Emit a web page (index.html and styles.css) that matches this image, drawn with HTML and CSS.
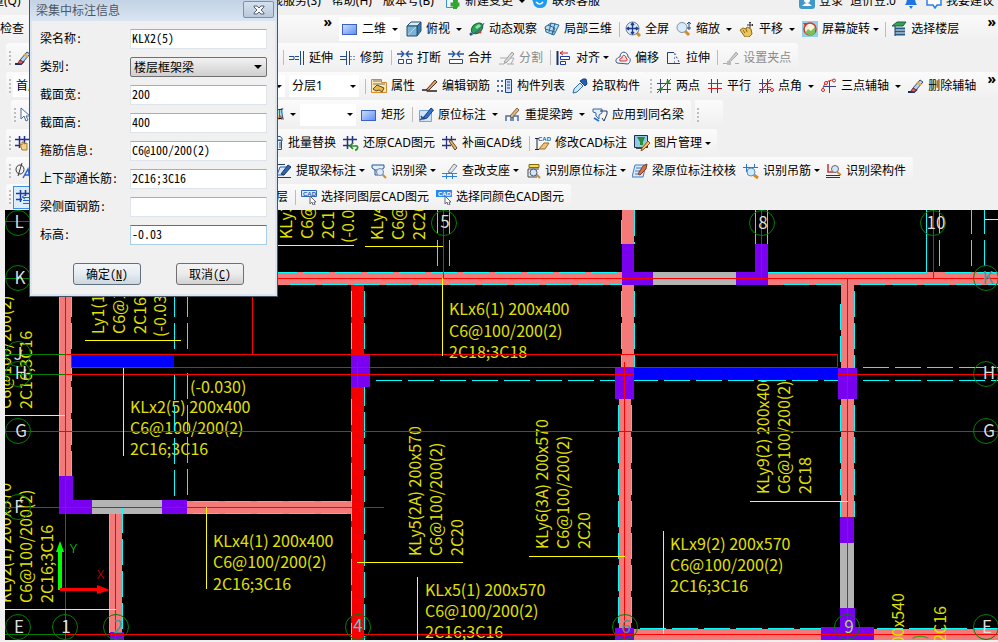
FILE: index.html
```html
<!DOCTYPE html>
<html lang="zh-CN">
<head>
<meta charset="utf-8">
<title>梁集中标注信息</title>
<link rel="stylesheet" href="styles.css">
</head>
<body>
<svg class="defs" aria-hidden="true">
  <defs>
    <linearGradient id="gBlue" x1="0" y1="0" x2="1" y2="1"><stop offset="0" stop-color="#cfe0ff"/><stop offset="1" stop-color="#5b8df0"/></linearGradient>
    <symbol id="rect" viewBox="0 0 16 16"><rect x=".5" y="3.500" width="14" height="10" fill="url(#gBlue)" stroke="#3a62c4"/></symbol>
    <symbol id="cube" viewBox="0 0 16 16"><path d="M1 5 5 1h10l-4 4z" fill="#d8edf8" stroke="#27506e"/><path d="M11 5l4-4v9l-4 5z" fill="#3b7ba6" stroke="#27506e"/><path d="M1 5h10v10H1z" fill="#79b4d8" stroke="#27506e"/><path d="M2 14 10 6" stroke="#b7dcf0"/></symbol>
    <symbol id="orbit" viewBox="0 0 16 16"><ellipse cx="8.500" cy="7.500" rx="6.500" ry="4.500" transform="rotate(-40 8 8)" fill="#2fa05a" stroke="#14673a"/><path d="M6 6l4-3 2 2-4 3z" fill="#9ae0a8"/><path d="M1 14c5-1 12-7 14-12" fill="none" stroke="#35608e"/><circle cx="2" cy="13" r="1.500" fill="#2a5288"/><circle cx="11" cy="11" r="1.500" fill="#d33"/></symbol>
    <symbol id="local3d" viewBox="0 0 16 16"><path d="M1 6l6-4 8 2-5 10-8-3z" fill="#b9dcf0" stroke="#2b6894"/><path d="M4 4l7 3-3 7M7 2l-2 9M1 8l10 3M11 2 8 13" fill="none" stroke="#2b6894"/></symbol>
    <symbol id="full" viewBox="0 0 16 16"><path d="M11 11l4 4" stroke="#d38a2a" stroke-width="3"/><circle cx="7.500" cy="7.500" r="6.500" fill="#dbe8fb" stroke="#6a7fa6"/><path d="M7.500 2v11M2 7.500h11M6 4l1.500-2L9 4M6 11l1.500 2L9 11M4 6 2 7.500 4 9M11 6l2 1.500L11 9" fill="none" stroke="#1c3d86" stroke-width="1.300"/></symbol>
    <symbol id="zoom" viewBox="0 0 16 16"><path d="M9 10l4 4" stroke="#d38a2a" stroke-width="3"/><circle cx="6" cy="6.500" r="5" fill="#d7ebfa" stroke="#8091ab"/><path d="M13 1v5M11 3l2-2 2 2M11 7h4M13 6v3" fill="none" stroke="#244a7a"/></symbol>
    <symbol id="pan" viewBox="0 0 16 16"><path d="M1 9l3-2 3 1 1-2 2 1 2 1 1 5-3 3H6z" fill="#e9c55c" stroke="#8e6a1e"/><path d="M4 9l2 3M7 8l1 3" stroke="#8e6a1e"/><path d="M11 1v6M8 4h6M10 2l1-1 1 1M13 3l1 1-1 1" fill="none" stroke="#333"/></symbol>
    <symbol id="rotate" viewBox="0 0 16 16"><path d="M0 0h16v16H0z" fill="#8fd0ea"/><circle cx="8" cy="8" r="6" fill="#f7f4dc" stroke="#d8352c" stroke-width="1.500"/><path d="M3 12l3-4 3 2 4-4v6l-4 3z" fill="#7ac05b"/><path d="M1 2l4 0-1 4z" fill="#d8352c"/></symbol>
    <symbol id="floors" viewBox="0 0 16 16"><path d="M1 5l5-4h9l-3 4z" fill="#36a05a" stroke="#156638"/><path d="M4 7.500h10M4 10.500h10M4 13.500h10" stroke="#245a8c" stroke-width="2"/><path d="M4 5v10" stroke="#1d3c66"/></symbol>
    <symbol id="extend" viewBox="0 0 16 16"><path d="M11.500 1v14M14.500 1v14" stroke="#224b8b"/><path d="M0 6.500h5v3H0M6 6.500h4M6 9.500h4" fill="none" stroke="#224b8b"/></symbol>
    <symbol id="trim" viewBox="0 0 16 16"><path d="M6.500 1v14M9.500 1v14M0 6.500h6M0 9.500h6" stroke="#224b8b"/><path d="M10 6.500h6M10 9.500h6" stroke="#7d97be" stroke-dasharray="2 1"/></symbol>
    <symbol id="break" viewBox="0 0 16 16"><path d="M0 4h6M16 4h-6M4 1l3 3-3 3M12 1 9 4l3 3" fill="none" stroke="#2450a0" stroke-width="1.300"/><path d="M1.500 9.500h5v4h-5zM9.500 9.500h5v4h-5z" fill="#fff" stroke="#2c4a80"/></symbol>
    <symbol id="merge" viewBox="0 0 16 16"><path d="M0 4h6M16 4h-6M4 1l3 3-3 3M12 1 9 4l3 3" fill="none" stroke="#2450a0" stroke-width="1.300"/><path d="M1.500 9.500h13v4h-13z" fill="#fff" stroke="#2c4a80"/></symbol>
    <symbol id="split" viewBox="0 0 16 16"><path d="M1 8h8l-4 6H0M8 14h7M11 8h4l-3 6" fill="none" stroke="#aaa"/><path d="M5 12 13 2l2 2-8 9z" fill="#ddd" stroke="#999"/></symbol>
    <symbol id="align" viewBox="0 0 16 16"><path d="M1.500 1v14" stroke="#1a2f6c" stroke-width="2"/><path d="M4.500 6.500h9v3h-9zM4.500 11.500h5v3h-5z" fill="#fff" stroke="#1b39a8"/><path d="M4 3h8M7 1 4 3l3 2" fill="none" stroke="#c22"/></symbol>
    <symbol id="offset" viewBox="0 0 16 16"><path d="M2 13c-3-3 1-6 3-6 0-7 8-6 8 0 3 1 3 5 0 7z" fill="#f2f6fc" stroke="#38598d"/><path d="M5 11c-1-2 1-3 2-3 0-4 4-3 4 0 2 1 1 3 0 3z" fill="#ffd9d4" stroke="#cc2f2b"/></symbol>
    <symbol id="stretch" viewBox="0 0 16 16"><path d="M8 2.500H1.500v11H14" fill="none" stroke="#1d3f7c"/><path d="M8.500 3l5 10" stroke="#1d3f7c" stroke-dasharray="2 2"/><path d="M8.500 3v10" stroke="#7892bb" stroke-dasharray="2 2"/></symbol>
    <symbol id="grip" viewBox="0 0 16 16"><path d="M0 13.500h4M12 13.500h4" stroke="#aaa"/><path d="M5 12 13 2l2 2-8 8z" fill="#ccc" stroke="#aaa"/><path d="M4 11h4v4H4z" fill="#bbb"/></symbol>
    <symbol id="prop" viewBox="0 0 16 16"><path d="M.5 1.500h10v3h5v10H.5z" fill="#fbe6b2" stroke="#d38b2d"/><path d="M2 3h8M2 6h12" stroke="#777"/><path d="M2 11l4-4 7 3-2 4-3-2-3 1z" fill="#e4b84a" stroke="#5d4a20"/></symbol>
    <symbol id="pen" viewBox="0 0 16 16"><path d="M0 12h4l3-2M5 13h10" fill="none" stroke="#222" stroke-width="1.500"/><path d="M5 11 13 2l2 2-8 8-3 1z" fill="#d7a070" stroke="#5b3420"/></symbol>
    <symbol id="list" viewBox="0 0 16 16"><path d="M0 3h2M4 3h2M0 8h2M4 8h2M0 13h2M4 13h2" stroke="#1f4590" stroke-width="1.500"/><path d="M8.500 1.500h6v13h-6z" fill="#cfe0f7" stroke="#1f4590"/><path d="M10 4h3M10 7h3M10 10h3" stroke="#1f4590"/></symbol>
    <symbol id="pick" viewBox="0 0 16 16"><path d="M1 15l1-4 6-6 3 3-6 6z" fill="#cfe7f8" stroke="#2d6da3"/><path d="M8 3l5 5 2-2-1-5-3 0z" fill="#1f62b8" stroke="#163f80"/></symbol>
    <symbol id="twopt" viewBox="0 0 16 16"><path d="M4.500 1v14M11.500 1v14M1 5.500h14M1 11.500h14" stroke="#3a3f86"/><path d="M1 15 15 1" stroke="#c22"/><circle cx="5" cy="11" r="1.700" fill="#2a8a2a"/><circle cx="12" cy="4" r="1.700" fill="#2a8a2a"/></symbol>
    <symbol id="para" viewBox="0 0 16 16"><path d="M4.500 1v14M10.500 1v14" stroke="#3a3f86"/><path d="M1 5.500h14M1 10.500h14" stroke="#c22"/></symbol>
    <symbol id="ptang" viewBox="0 0 16 16"><path d="M4.500 1v14M9.500 1v14M1 5.500h14M1 11.500h12" stroke="#3a3f86"/><path d="M1 15 13 1M9 12c0-3 4-4 5-1" fill="none" stroke="#c22"/><circle cx="14" cy="12" r="1.500" fill="none" stroke="#c22"/></symbol>
    <symbol id="threept" viewBox="0 0 16 16"><path d="M8.500 3v12M3 8.500h12" stroke="#3a3f86"/><path d="M2 12C2 6 6 2 13 2" fill="none" stroke="#c22"/><circle cx="2" cy="12" r="1.500" fill="#fff" stroke="#c22"/><circle cx="5" cy="5" r="1.500" fill="#fff" stroke="#c22"/><circle cx="13" cy="2.500" r="1.500" fill="#fff" stroke="#c22"/></symbol>
    <symbol id="erase" viewBox="0 0 16 16"><path d="M0 14h6l3-3" fill="none" stroke="#1b2c60" stroke-width="2"/><path d="M5 10 12 2l3 2-7 8z" fill="#bcd0e6" stroke="#334d78"/><path d="M5 10l3 2-2 2-3-1z" fill="#e06060" stroke="#733"/><path d="M9 4l4 3" stroke="#e0b040" stroke-width="2"/></symbol>
    <symbol id="origin" viewBox="0 0 16 16"><path d="M1.500 3.500h12v11h-12z" fill="#cfe2f8" stroke="#7ea2d4"/><path d="M3 9l2 3 4-5M2 13l4-3" fill="none" stroke="#224b8b" stroke-width="1.500"/><path d="M6 10 13 1l2.500 2L9 11l-3 1z" fill="#2f74cc" stroke="#173e80"/></symbol>
    <symbol id="respan" viewBox="0 0 16 16"><path d="M1 14V9h5v5M8 14V9h5v5" fill="none" stroke="#4d6ea0" stroke-width="1.500"/><path d="M5 9 12 1l2 2-7 8z" fill="#d9b78c" stroke="#80603a"/></symbol>
    <symbol id="apply" viewBox="0 0 16 16"><path d="M1 2h9v4l-3 2v4L4 9V6L1 5z" fill="#e3eefb" stroke="#3666a8"/><path d="M8 4h7v3l-3 7-2-3" fill="none" stroke="#22355f"/><path d="M2 11l5 3" stroke="#2a70c8" stroke-width="2"/></symbol>
    <symbol id="trash" viewBox="0 0 16 16"><path d="M4.500 5.500h9v9h-9zM3 5h12M6 7v6M9 7v6M12 7v6" fill="#e8f0fa" stroke="#2c507f"/><path d="M8 4c0-4 6-3 6 0" fill="none" stroke="#2c507f"/></symbol>
    <symbol id="restore" viewBox="0 0 16 16"><path d="M4.500 1v13M9.500 1v8M0 4.500h14M0 10.500h8" stroke="#27347c" stroke-width="1.500"/><path d="M8 11h4c4-1 3 4 0 4M10 8l-3 3 3 3" fill="none" stroke="#2c8c2c" stroke-width="1.700"/></symbol>
    <symbol id="patch" viewBox="0 0 16 16"><path d="M4.500 1v13M9.500 1v9M0 4.500h14M0 10.500h9" stroke="#27347c" stroke-width="1.300"/><path d="M7 6l2-1 6 8-2 2z" fill="#e5be66" stroke="#66401a"/></symbol>
    <symbol id="cadedit" viewBox="0 0 16 16"><path d="M0 3.500h4M2 4v10M0 14.500h4" stroke="#222" fill="none"/><text x="3" y="6" class="cad-mark">CAD</text><path d="M4 14l5-6h5l-4 6z" fill="#efc47a" stroke="#9c6a25"/></symbol>
    <symbol id="image" viewBox="0 0 16 16"><path d="M.5.500h13v12H.5z" fill="#8fcbe8" stroke="#222b50"/><path d="M3 2h8L9 7v3H6V7z" fill="#2e8a36"/><path d="M2 13h8" stroke="#444" stroke-width="2"/><path d="M8 13l6-7 2 2-6 6-3 2z" fill="#f0c45d" stroke="#9a4a20"/></symbol>
    <symbol id="extract" viewBox="0 0 16 16"><path d="M0 1.500h9M0 14.500h15" stroke="#223a6c"/><path d="M1 12 4 4h7l-3 8z" fill="#dbe9fa" stroke="#2e5c9c"/><path d="M5 11 12 2l3 2-7 8z" fill="#2f67b6" stroke="#173468"/></symbol>
    <symbol id="recog" viewBox="0 0 16 16"><path d="M1 2h12v3l-3 2H4L1 5z" fill="#e3eefb" stroke="#27549a"/><path d="M4 7v5h3" fill="none" stroke="#27549a"/><path d="M11 11l4 4" stroke="#d38a2a" stroke-width="2"/><circle cx="9" cy="9" r="3.500" fill="#d9ecfb" stroke="#76869c"/></symbol>
    <symbol id="support" viewBox="0 0 16 16"><path d="M0 10.500h15M0 13.500h15M4.500 10v6M10.500 10v6" stroke="#2f7fd6"/><path d="M6 9 12 1l3 2-6 7z" fill="#e3e8ef" stroke="#75808f"/></symbol>
    <symbol id="recorig" viewBox="0 0 16 16"><path d="M4 1.500h10v3H4z" fill="#f5dc4c" stroke="#826a10"/><path d="M3 6h11M3 6v8h9" stroke="#444" fill="none"/><path d="M11 11l4 4" stroke="#d38a2a" stroke-width="2"/><circle cx="8.500" cy="9.500" r="3.500" fill="#cfe5f8" stroke="#556"/></symbol>
    <symbol id="check" viewBox="0 0 16 16"><path d="M3 2h11l-3 12H0z" fill="#dbeafa" stroke="#3b7cc4"/><path d="M4 5h6M3 8h5M3 11h4" stroke="#3b7cc4"/><path d="M6 11l5-8 4-2-1 5-6 6z" fill="#d5744c" stroke="#833c22"/></symbol>
    <symbol id="hanger" viewBox="0 0 16 16"><path d="M0 4.500h15M3.500 1v8M11.500 1v4" stroke="#2f74cc"/><path d="M11 12l4 3" stroke="#d38a2a" stroke-width="3"/><circle cx="8" cy="9" r="4" fill="#cdeafa" stroke="#5b8cb4"/></symbol>
    <symbol id="reccomp" viewBox="0 0 16 16"><path d="M2 1v8h7" fill="none" stroke="#c33" stroke-width="1.500"/><path d="M0 12.500h14M0 14.500h14" stroke="#334"/><path d="M11 9l4 3" stroke="#d38a2a" stroke-width="2"/><circle cx="9" cy="6" r="3.500" fill="#d3e7fa" stroke="#667"/></symbol>
    <symbol id="cadsel" viewBox="0 0 16 16"><path d="M.5 1.500h15v6H.5z" fill="#dcebfb" stroke="#2a68c0"/><text x="2" y="7" class="cad-mark">CAD</text><path d="M9 7v8l2-2 1 3h2l-1-3h2z" fill="#fff" stroke="#667"/></symbol>
    <symbol id="cadcol" viewBox="0 0 16 16"><path d="M0 1h16v7H0z" fill="#2f86e8"/><text x="2" y="7" class="cad-mark cad-mark--light">CAD</text><path d="M9 7v8l2-2 1 3h2l-1-3h2z" fill="#fff" stroke="#667"/></symbol>
    <symbol id="newdoc" viewBox="0 0 16 16"><path d="M1.500.500h11v14h-11z" fill="#eef7ff" stroke="#3d8fd4"/><path d="M10 7v9M5.500 11.500h9" stroke="#35a532" stroke-width="4"/></symbol>
    <symbol id="service" viewBox="0 0 16 16"><path d="M0 6h15v3q-1 6-7 6T1 9z" fill="#1d9bf0"/><path d="M4 9q4 4 7 0" fill="none" stroke="#fff" stroke-width="1.500"/></symbol>
    <symbol id="user" viewBox="0 0 16 16"><rect width="16" height="16" rx="3" fill="#4298c8"/><circle cx="8" cy="7" r="3" fill="#fff"/><path d="M3 13q5-6 10 0z" fill="#fff"/></symbol>
    <symbol id="bell" viewBox="0 0 16 16"><path d="M2 12q2-2 2-7 4-6 8 0 0 5 2 7z" fill="#1e74e0"/><path d="M6 13h4l-2 3z" fill="#1e74e0"/></symbol>
    <symbol id="bubble" viewBox="0 0 16 16"><path d="M1 3h14v9h-4l-2 3-2-3H1z" fill="#fff" stroke="#2f7fe0" stroke-width="1.500"/></symbol>
    <symbol id="cursor" viewBox="0 0 16 16"><path d="M1 1v11l3-3 2 5 2-1-2-4h4z" fill="#fff" stroke="#4b6a9a"/></symbol>
    <symbol id="gridhand" viewBox="0 0 16 16"><path d="M4.500 1v12M9.500 1v8M0 4.500h14M0 10.500h5" stroke="#222a90" stroke-width="1.500"/><path d="M5 9l2 1V7l2 0v2l3-1v7H7z" fill="#f2d28a" stroke="#a47a2a"/></symbol>
    <symbol id="phi" viewBox="0 0 16 16"><ellipse cx="5" cy="6.500" rx="4" ry="4.500" fill="none" stroke="#333"/><path d="M7 0 3 13" stroke="#333"/><path d="M8 15l5-9 2 9M10 12h5" fill="none" stroke="#2e62c8" stroke-width="1.500"/></symbol>
    <symbol id="gridlayer" viewBox="0 0 16 16"><path d="M4.500 1v12M9.500 1v6M0 4.500h14M0 10.500h6" stroke="#1d3f8c" stroke-width="1.500"/><path d="M7 8.500h8M7 11.500h8M7 14.500h8M9 6 6 8l3 2" fill="none" stroke="#1b66d0"/></symbol>
  </defs>
</svg>

<header class="toolbars">
  <nav class="menu" aria-label="菜单">
    <div class="menu__dock"><button class="btn">量(Q)</button></div>
    <button class="menu__item">在线服务(S)</button>
    <button class="menu__item">帮助(H)</button>
    <button class="menu__item">版本号(B)</button>
    <button class="btn btn--split"><svg class="ico"><use href="#newdoc"/></svg>新建变更</button>
    <button class="btn"><svg class="ico"><use href="#service"/></svg>联系客服</button>
    <div class="menu__account">
      <button class="btn"><svg class="ico"><use href="#user"/></svg>登录</button>
      <span class="btn">造价豆:0</span>
      <button class="btn" aria-label="通知"><svg class="ico"><use href="#bell"/></svg></button>
      <button class="btn"><svg class="ico"><use href="#bubble"/></svg>我要建议</button>
    </div>
  </nav>

  <div class="row row--full">
    <div class="dock dock--wide"><button class="btn">检查</button><button class="more">»</button></div>
    <div class="band">
      <button class="btn btn--split btn--white"><svg class="ico"><use href="#rect"/></svg>二维</button>
      <button class="btn btn--split"><svg class="ico"><use href="#cube"/></svg>俯视</button>
      <button class="btn"><svg class="ico"><use href="#orbit"/></svg>动态观察</button>
      <button class="btn"><svg class="ico"><use href="#local3d"/></svg>局部三维</button>
      <i class="sep"></i>
      <button class="btn"><svg class="ico"><use href="#full"/></svg>全屏</button>
      <button class="btn btn--split"><svg class="ico"><use href="#zoom"/></svg>缩放</button>
      <button class="btn btn--split"><svg class="ico"><use href="#pan"/></svg>平移</button>
      <button class="btn btn--menu"><svg class="ico"><use href="#rotate"/></svg>屏幕旋转</button>
      <i class="sep"></i>
      <button class="btn"><svg class="ico"><use href="#floors"/></svg>选择楼层</button>
    </div>
    <button class="more">»</button>
  </div>

  <div class="row">
    <div class="dock dock--panel"><i class="handle"></i><button class="btn" aria-label="删除"><svg class="ico"><use href="#erase"/></svg></button></div>
    <div class="band band--sep">
      <i class="sep"></i>
      <button class="btn"><svg class="ico"><use href="#extend"/></svg>延伸</button>
      <button class="btn"><svg class="ico"><use href="#trim"/></svg>修剪</button>
      <i class="sep"></i>
      <button class="btn"><svg class="ico"><use href="#break"/></svg>打断</button>
      <button class="btn"><svg class="ico"><use href="#merge"/></svg>合并</button>
      <button class="btn" disabled><svg class="ico"><use href="#split"/></svg>分割</button>
      <i class="sep"></i>
      <button class="btn btn--menu"><svg class="ico"><use href="#align"/></svg>对齐</button>
      <button class="btn"><svg class="ico"><use href="#offset"/></svg>偏移</button>
      <button class="btn"><svg class="ico"><use href="#stretch"/></svg>拉伸</button>
      <i class="sep"></i>
      <button class="btn" disabled><svg class="ico"><use href="#grip"/></svg>设置夹点</button>
    </div>
  </div>

  <div class="row">
    <div class="dock dock--panel"><i class="handle"></i><label class="combo combo--floor"><select aria-label="楼层"><option>首层</option></select></label></div>
    <div class="band">
      <label class="combo combo--stub"><select aria-label="构件"><option></option></select></label>
      <label class="combo combo--layer"><select aria-label="分层"><option>分层1</option></select></label>
      <i class="sep"></i>
      <button class="btn"><svg class="ico"><use href="#prop"/></svg>属性</button>
      <button class="btn"><svg class="ico"><use href="#pen"/></svg>编辑钢筋</button>
      <button class="btn"><svg class="ico"><use href="#list"/></svg>构件列表</button>
      <button class="btn"><svg class="ico"><use href="#pick"/></svg>拾取构件</button>
    </div>
    <div class="band band--grow">
      <i class="handle"></i>
      <button class="btn"><svg class="ico"><use href="#twopt"/></svg>两点</button>
      <button class="btn"><svg class="ico"><use href="#para"/></svg>平行</button>
      <button class="btn btn--split"><svg class="ico"><use href="#ptang"/></svg>点角</button>
      <button class="btn btn--split"><svg class="ico"><use href="#threept"/></svg>三点辅轴</button>
      <button class="btn"><svg class="ico"><use href="#erase"/></svg>删除辅轴</button>
      <button class="more">»</button>
    </div>
  </div>

  <div class="row">
    <div class="dock dock--panel dock--inset"><i class="handle"></i><button class="btn" aria-label="选择"><svg class="ico"><use href="#cursor"/></svg></button></div>
    <div class="band band--arc">
      <button class="btn btn--split btn--flush">弧</button>
      <label class="combo combo--blank"><select aria-label="画法"><option></option></select></label>
      <button class="btn"><svg class="ico"><use href="#rect"/></svg>矩形</button>
      <i class="sep"></i>
      <button class="btn btn--split"><svg class="ico"><use href="#origin"/></svg>原位标注</button>
      <button class="btn btn--split"><svg class="ico"><use href="#respan"/></svg>重提梁跨</button>
      <button class="btn"><svg class="ico"><use href="#apply"/></svg>应用到同名梁</button>
    </div>
    <div class="band band--empty"><i class="handle"></i></div>
  </div>

  <div class="row">
    <div class="dock dock--panel"><i class="handle"></i><button class="btn" aria-label="定位"><svg class="ico"><use href="#gridhand"/></svg></button></div>
    <div class="band">
      <button class="btn"><svg class="ico"><use href="#trash"/></svg>批量替换</button>
      <button class="btn"><svg class="ico"><use href="#restore"/></svg>还原CAD图元</button>
      <button class="btn"><svg class="ico"><use href="#patch"/></svg>补画CAD线</button>
      <i class="sep"></i>
      <button class="btn"><svg class="ico"><use href="#cadedit"/></svg>修改CAD标注</button>
      <button class="btn btn--menu"><svg class="ico"><use href="#image"/></svg>图片管理</button>
    </div>
  </div>

  <div class="row">
    <div class="dock dock--panel"><i class="handle"></i><button class="btn" aria-label="钢筋符号"><svg class="ico"><use href="#phi"/></svg></button></div>
    <div class="band band--text">
      <button class="btn btn--menu"><svg class="ico"><use href="#extract"/></svg>提取梁标注</button>
      <button class="btn btn--menu"><svg class="ico"><use href="#recog"/></svg>识别梁</button>
      <button class="btn btn--menu"><svg class="ico"><use href="#support"/></svg>查改支座</button>
      <button class="btn btn--menu"><svg class="ico"><use href="#recorig"/></svg>识别原位标注</button>
      <button class="btn"><svg class="ico"><use href="#check"/></svg>梁原位标注校核</button>
      <button class="btn btn--menu"><svg class="ico"><use href="#hanger"/></svg>识别吊筋</button>
      <button class="btn"><svg class="ico"><use href="#reccomp"/></svg>识别梁构件</button>
    </div>
  </div>

  <div class="row">
    <div class="dock dock--panel"><i class="handle"></i><button class="btn btn--active" aria-label="选择图层"><svg class="ico"><use href="#gridlayer"/></svg></button></div>
    <div class="band band--text">
      <button class="btn">层</button>
      <i class="sep"></i>
      <button class="btn"><svg class="ico"><use href="#cadsel"/></svg>选择同图层CAD图元</button>
      <button class="btn"><svg class="ico"><use href="#cadcol"/></svg>选择同颜色CAD图元</button>
    </div>
  </div>
</header>

<main class="drawing">
<svg class="plan" viewBox="5 210 993 430" preserveAspectRatio="xMinYMin slice" role="img" aria-label="梁平面图">
  <rect x="5" y="210" width="993" height="430" fill="#000"/>

  <!-- beam annotations -->
  <g class="note">
    <text x="190" y="393">(-0.030)</text>
    <text x="130" y="413">KLx2(5) 200x400</text><text x="130" y="434">C6@100/200(2)</text><text x="130" y="455">2C16;3C16</text>
    <text x="213" y="547">KLx4(1) 200x400</text><text x="213" y="568">C6@100/200(2)</text><text x="213" y="590">2C16;3C16</text>
    <text x="449" y="315">KLx6(1) 200x400</text><text x="449" y="337">C6@100/200(2)</text><text x="449" y="358">2C18;3C18</text>
    <text x="425" y="596">KLx5(1) 200x570</text><text x="425" y="617">C6@100/200(2)</text><text x="425" y="638">2C16;3C16</text>
    <text x="670" y="550">KLx9(2) 200x570</text><text x="670" y="571">C6@100/200(2)</text><text x="670" y="592">2C16;3C16</text>
    <text transform="translate(421 556) rotate(-90)">KLy5(2A) 200x570</text><text transform="translate(442 556) rotate(-90)">C6@100/200(2)</text><text transform="translate(463 556) rotate(-90)">2C20</text>
    <text transform="translate(548 549) rotate(-90)">KLy6(3A) 200x570</text><text transform="translate(569 549) rotate(-90)">C6@100/200(2)</text><text transform="translate(590 549) rotate(-90)">2C20</text>
    <text transform="translate(769 494) rotate(-90)">KLy9(2) 200x400</text><text transform="translate(790 494) rotate(-90)">C6@100/200(2)</text><text transform="translate(811 494) rotate(-90)">2C18</text>
    <text transform="translate(292 239) rotate(-90)">KLy3(1)</text><text transform="translate(313 239) rotate(-90)">C6@100</text><text transform="translate(334 239) rotate(-90)">2C16</text><text transform="translate(354 243) rotate(-90)">(-0.030)</text>
    <text transform="translate(383 240) rotate(-90)">KLy4(1)</text><text transform="translate(404 240) rotate(-90)">C6@100</text><text transform="translate(425 240) rotate(-90)">2C20</text>
    <text transform="translate(104 334) rotate(-90)">Ly1(1)</text><text transform="translate(125 334) rotate(-90)">C6@100</text><text transform="translate(146 334) rotate(-90)">2C16</text><text transform="translate(166 337) rotate(-90)">(-0.030)</text>
    <text transform="translate(11 409) rotate(-90)">C6@100/200(2)</text><text transform="translate(32 409) rotate(-90)">2C16;3C16</text>
    <text transform="translate(11 603) rotate(-90)">KLy2(1) 200x570</text><text transform="translate(32 603) rotate(-90)">C6@100/200(2)</text><text transform="translate(53 603) rotate(-90)">2C16;3C16</text>
  </g>

  <!-- beams -->
  <g class="beam">
    <path d="M59 285h12v191H59zM59 272h563v13H59zM187 501h164v13H187zM110 514h12v118h-12zM622 210h12v34h-12zM622 285h12v83h-12zM768 272h230v13H768zM841 285h13v83h-13zM841 399h13v118h-13zM619 399h12v229h-12zM634 629h187v11H634zM874 629h124v11H874z"/>
  </g>
  <path fill="#f40000" d="M351 285h13v355h-13z"/>
  <path fill="#b4b4b4" d="M92 500h70v14H92zM653 272h83v13h-83zM840 543h14v65h-14z"/>

  <!-- beam edges -->
  <path class="edge" d="M59.500 285v191M109.500 514v119M768 272.500h158.500V210M755.500 210v34M767.500 210v34"/>
  <path class="edge edge--dash" d="M71.500 291v185M174.500 291v60M187.500 291v60M174.500 374v122M187.500 373v122M122.500 507v122M193 501.500h158M193 513.500h158M271 272.500h351M290 284.500h332M351.500 291v64M364.500 291v64M351.500 399v241M364.500 380v260M437.500 208v60M449.500 208v60M939.500 208v60M971.500 208v60M984.500 208v58M621.500 220v24M634.500 210v34M621.500 291v77M634.500 291v77M945 272.500h53M784 284.500h57M860 284.500h138M840.500 304v64M854.500 291v77M840.500 405v112M854.500 405v112M618.500 405v223M631.500 405v223M376 380.500h462M863 367.500h135M863 380.500h135M640 628.500h181M877 628.500h121"/>

  <!-- columns -->
  <path fill="#7a00f0" d="M59 476h14v24h19v14H59zM162 500h25v14h-25zM110 632h14v8h-14zM351 355h19v32h-19zM622 244h12v28h19v13h-31zM755 244h13v41h-32v-13h19zM615 368h19v31h-19zM838 368h19v31h-19zM840 517h14v26h-14zM840 608h15v19h19v13h-53v-13h19zM615 628h19v12h-19z"/>

  <!-- grid axes -->
  <path class="axis" d="M65 354.500h772.500v13H71.500v-13M65 374.500h933M65 431.500h933M65 507.500h319M65 278.500h933M65 634.500h933M65.500 290v350M115.500 514v126M252.500 290v64M443.500 210v68M761.500 210v68M933.500 210v68M847.500 278v362M624.500 362v278M357.500 362v25"/>
  <path class="axis axis--green" d="M5 221.500h25M5 278.500h60M5 354.500h60M5 374.500h60M5 431.500h60M5 507.500h60M5 634.500h60"/>

  <!-- checked beams and leaders -->
  <path fill="#00f" d="M72 355h102v12H72zM634 368h204v12H634z"/>
  <path class="leader" d="M85 340.500h96M5 415.500h60M5 609.500h111M123.500 368v88M206.500 507v82M442.500 278v78M417.500 577v63M663.500 531v103M357 562.500h106M529 556.500h96M750 501.500h98M277 245.500h77M365 246.500h78M985 219.500h13"/>

  <g class="note"><text class="end" transform="translate(904 593) rotate(-90)">200x540</text><text class="end" transform="translate(946 606) rotate(-90)">2C16</text><text class="end note--dim" transform="translate(925 634) rotate(-90)">(2)</text></g>

  <!-- axis bubbles -->
  <g class="bubble">
    <circle cx="18" cy="223" r="12.500"/><circle cx="18" cy="278" r="12.500"/><circle cx="18" cy="354" r="12.500"/><circle cx="18" cy="374" r="12.500"/><circle cx="18" cy="431" r="12.500"/><circle cx="18" cy="507" r="12.500"/><circle cx="18" cy="627" r="12.500"/>
    <circle cx="65" cy="627" r="12.500"/><circle cx="116" cy="627" r="12.500"/><circle cx="358" cy="627" r="12.500"/><circle cx="625" cy="627" r="12.500"/><circle cx="847" cy="627" r="12.500"/><circle cx="986" cy="627" r="12.500"/>
    <circle cx="986" cy="431" r="12.500"/><circle cx="986" cy="374" r="12.500"/><circle cx="986" cy="278" r="12.500"/><circle cx="444" cy="223" r="12.500"/><circle cx="762" cy="223" r="12.500"/><circle cx="933" cy="223" r="12.500"/>
  </g>
  <g class="axis-name">
    <text x="19" y="228">L</text><text x="20" y="284">K</text><text x="18" y="360">J</text><text x="21" y="379">H</text><text x="21" y="437">G</text><text x="19" y="513">F</text><text x="19" y="633">E</text>
    <text x="66" y="633">1</text><text class="teal" x="118" y="633">2</text><text class="cyan" x="358" y="632">4</text><text class="teal" x="626" y="633">6</text><text class="lime" x="849" y="633">9</text><text x="987" y="633">E</text>
    <text x="989" y="437">G</text><text x="989" y="379">H</text><text class="teal" x="988" y="284">K</text><text x="445" y="228">5</text><text x="763" y="229">8</text><text x="936" y="229">10</text>
  </g>

  <!-- coordinate tripod -->
  <path fill="#0f0" d="M58 590v-38h-2l4-11 4 11h-2v38z"/><path fill="#f00" d="M60 588h37v-3l13 5-13 4v-3H60z"/>
  <text x="70" y="553" class="ucs ucs--y">Y</text><text x="97" y="579" class="ucs ucs--x">X</text>
</svg>
</main>

<form class="dialog" role="dialog" aria-labelledby="dlg-title">
  <div class="dialog__title"><span id="dlg-title">梁集中标注信息</span>
    <button type="button" class="close" aria-label="关闭"><svg width="12" height="10" viewBox="0 0 12 10"><path d="M1 1h3l2 2 2-2h3v1L8 5l3 3v1H8L6 7 4 9H1V8l3-3-3-3z" fill="#fff" stroke="#566070"/></svg></button>
  </div>
  <div class="dialog__body">
    <div class="field"><label for="f1">梁名称:</label><input id="f1" value="KLX2(5)"></div>
    <div class="field"><label for="f2">类别:</label><span class="pick"><select id="f2"><option>楼层框架梁</option></select></span></div>
    <div class="field"><label for="f3">截面宽:</label><input id="f3" value="200"></div>
    <div class="field"><label for="f4">截面高:</label><input id="f4" value="400"></div>
    <div class="field"><label for="f5">箍筋信息:</label><input id="f5" value="C6@100/200(2)"></div>
    <div class="field"><label for="f6">上下部通长筋:</label><input id="f6" value="2C16;3C16"></div>
    <div class="field"><label for="f7">梁侧面钢筋:</label><input id="f7" value=""></div>
    <div class="field"><label for="f8">标高:</label><input id="f8" class="is-current" value="-0.03"></div>
    <div class="actions"><button type="button" class="push push--default">确定(<u>N</u>)</button><button type="button" class="push">取消(<u>C</u>)</button></div>
  </div>
</form>
</body>
</html>
```
FILE: styles.css
```css
* { box-sizing: border-box; }

html, body { height: 100%; }

body {
  margin: 0;
  position: relative;
  display: flex;
  flex-direction: column;
  overflow: hidden;
  background: #f0f0f0;
  color: #000;
  font: 12px/16px "Noto Sans", "Noto Sans CJK SC", sans-serif;
}

button, input, select { font: inherit; color: inherit; }

.defs { position: absolute; width: 0; height: 0; }
.cad-mark { font: bold 6px "Liberation Sans", sans-serif; fill: #1d5fb8; }
.cad-mark--light { fill: #fff; }

/* toolbars */
.toolbars {
  flex: none;
  display: grid;
  grid-template-rows: 15px 28px 29px 28px 29px 28px 27px 26px;
}

.menu {
  display: flex;
  align-items: center;
  height: 28px;
  margin-top: -13px;
}
.menu__dock { flex: 0 0 259px; }
.menu__dock .btn { margin-left: -8px; }
.menu__item {
  border: 0;
  padding: 0;
  margin-right: 11px;
  background: none;
  white-space: nowrap;
}
.menu__account { display: flex; margin-left: auto; }
.menu__account .btn:last-child { margin-right: 4px; }

.row { display: flex; align-items: stretch; min-width: 0; }
.row--full { background: linear-gradient(#fafafa, #efefef); }

.dock {
  flex: 0 0 268px;
  display: flex;
  align-items: center;
}
.dock--wide { flex-basis: 339px; justify-content: space-between; }
.dock--panel {
  margin-left: 6px;
  flex-basis: 262px;
  padding-left: 3px;
  border-radius: 3px 0 0 3px;
  background: linear-gradient(#fbfbfb, #efefef);
}
.dock--inset { margin-left: 11px; flex-basis: 257px; }

.band {
  display: flex;
  align-items: center;
  border-radius: 0 3px 3px 0;
  background: linear-gradient(#fbfbfb, #efefef);
}
.row--full .band { background: none; }
.band--sep { padding-left: 15px; }
.band--arc { padding-left: 4px; }
.band--text { padding-left: 8px; }
.band--grow { flex: 1; padding-left: 3px; }
.band--empty { width: 28px; margin-left: 4px; padding-left: 2px; }

.handle {
  flex: none;
  width: 2px;
  height: 14px;
  margin-right: 4px;
  background: repeating-linear-gradient(#bdbdbd 0 2px, transparent 2px 4px);
}
.sep {
  flex: none;
  width: 1px;
  height: 15px;
  margin-right: 5px;
  background: #bcbcbc;
}

.btn {
  display: flex;
  align-items: center;
  gap: 4px;
  flex: none;
  border: 0;
  padding: 0;
  margin-right: 7px;
  background: none;
  white-space: nowrap;
}
.btn:disabled { color: #8c8c8c; }
.btn--split::after, .btn--menu::after, .combo::after, .pick::after {
  content: "";
  border: 3px solid transparent;
  border-top-color: #000;
  border-bottom: 0;
}
.btn--split { margin-right: 6px; }
.btn--split::after { margin: 0 1px 0 2px; }
.btn--menu { margin-right: 6px; }
.btn--menu::after { margin-left: -1px; }
.btn--flush { margin-right: 3px; }
.btn--white { height: 24px; padding: 0 1px 0 3px; background: #fff; }
.btn--active { padding: 2px; height: 23px; border: 1px solid #3c8fe8; background: #dcecfb; margin-left: -2px; width: 40px; }
.ico { flex: none; width: 16px; height: 16px; }

.more {
  align-self: flex-start;
  border: 0;
  padding: 0;
  margin: 0 7px 0 auto;
  background: none;
  font-weight: bold;
  font-size: 14px;
  line-height: 14px;
}
.row--full > .more, .band .more { margin-right: 2px; }

.combo { position: relative; display: flex; align-items: center; height: 22px; background: #fff; }
.combo select { appearance: none; width: 100%; border: 0; padding: 0 3px; background: none; }
.combo::after { position: absolute; right: 3px; }
.combo--stub { width: 17px; margin-right: 4px; }
.combo--layer { width: 70px; margin-right: 6px; }
.combo--blank { width: 56px; margin-right: 5px; }
.combo--floor { width: 100px; margin-left: -2px; }

/* drawing area */
.drawing { flex: 1; min-height: 0; margin: 0 0 2px 5px; overflow: hidden; background: #000; }
.plan { display: block; width: 100%; height: 100%; }
.note { fill: #e0e000; font: 16px "Noto Sans CJK SC", sans-serif; }
.note .end { text-anchor: end; }
.note .note--dim { fill: #3f9c20; }
.leader { stroke: #ff0; fill: none; }
.beam { fill: #f47a7a; }
.edge { stroke: #0ff; fill: none; }
.edge--dash { stroke-dasharray: 26 6; }
.axis { stroke: #f00; fill: none; }
.axis--green { stroke: #008000; }
.bubble { stroke: #008000; fill: none; }
.axis-name { fill: #dcdcdc; font: 17px "Noto Sans CJK SC", sans-serif; text-anchor: middle; }
.axis-name .teal { fill: #4a9494; }
.axis-name .cyan { fill: #40d0e0; }
.axis-name .lime { fill: #a8d860; }
.ucs { font: 300 13px "Open Sans", sans-serif; }
.ucs--y { fill: #0f0; }
.ucs--x { fill: #f00; }

/* dialog */
.dialog {
  position: absolute;
  top: 0;
  left: 29px;
  width: 249px;
  border: 1px solid #4a525c;
  border-top: 0;
  background: #dbe6f3;
  font: 12px/16px "Noto Sans CJK SC", sans-serif;
}
.dialog__title {
  display: flex;
  align-items: center;
  justify-content: space-between;
  height: 21px;
  padding: 0 3px 2px 6px;
  background: linear-gradient(#c3d2e4, #d9e5f2);
  color: #4c5866;
}
.close {
  display: flex;
  align-items: center;
  justify-content: center;
  width: 31px;
  height: 17px;
  padding: 0;
  border: 1px solid #7f8fa6;
  border-radius: 2px;
  background: linear-gradient(#d5e0ee, #b9c9dd);
}
.dialog__body {
  margin: 0 2px 2px;
  padding: 4px 8px 9px;
  background: #f0f0f0;
  font-feature-settings: "hwid";
}
.field { display: flex; align-items: center; height: 28px; }
.field label { flex: 0 0 90px; line-height: 18px; padding-bottom: 2px; }
.field input, .pick { width: 137px; height: 20px; }
.field input {
  padding: 0 1px 4px;
  border: 1px solid #dfe3ea;
  border-top-color: #abadb3;
  background: #fff;
  font-feature-settings: "hwid";
}
.field .is-current { border-color: #a9cfe8; border-top-color: #3d7bad; }
.pick { position: relative; display: flex; align-items: center; }
.pick select {
  appearance: none;
  width: 100%;
  height: 20px;
  padding: 0 3px;
  border: 1px solid #707070;
  border-radius: 2px;
  background: linear-gradient(#f2f2f2, #ddd 60%, #cfcfcf);
}
.pick::after { position: absolute; right: 5px; border-width: 4px 4px 0; }
.actions { display: flex; gap: 35px; margin: 14px 0 0 33px; }
.push {
  width: 68px;
  height: 22px;
  padding: 0;
  border: 1px solid #707070;
  border-radius: 3px;
  background: linear-gradient(#f3f3f3, #ebebeb 50%, #d2d2d2);
  font-feature-settings: "hwid";
}
.push--default { border-color: #5f7180; background: linear-gradient(#f2f6f9, #e6ecf0 50%, #cdd6dd); }
```
